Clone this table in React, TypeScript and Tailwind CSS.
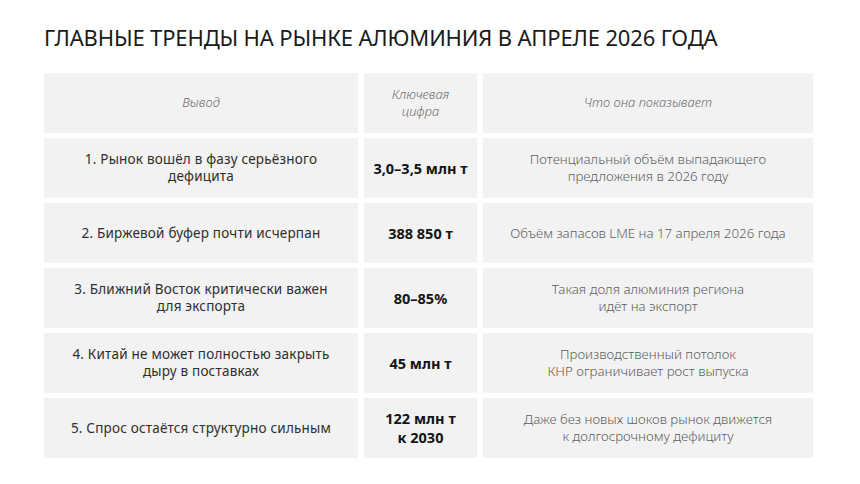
const rows = [
  {
    title: ["1. Рынок вошёл в фазу серьёзного", "дефицита"],
    value: ["3,0–3,5 млн т"],
    note: ["Потенциальный объём выпадающего", "предложения в 2026 году"],
  },
  {
    title: ["2. Биржевой буфер почти исчерпан"],
    value: ["388 850 т"],
    note: ["Объём запасов LME на 17 апреля 2026 года"],
  },
  {
    title: ["3. Ближний Восток критически важен", "для экспорта"],
    value: ["80–85%"],
    note: ["Такая доля алюминия региона", "идёт на экспорт"],
  },
  {
    title: ["4. Китай не может полностью закрыть", "дыру в поставках"],
    value: ["45 млн т"],
    note: ["Производственный потолок", "КНР ограничивает рост выпуска"],
  },
  {
    title: ["5. Спрос остаётся структурно сильным"],
    value: ["122 млн т", "к 2030"],
    note: ["Даже без новых шоков рынок движется", "к долгосрочному дефициту"],
  },
];

const cell = "flex flex-col items-center justify-center text-center bg-[#f2f2f2] h-[60px] whitespace-nowrap";

function Lines({ lines }: { lines: string[] }) {
  return (
    <>
      {lines.map((l) => (
        <span key={l}>{l}</span>
      ))}
    </>
  );
}

export default function App() {
  return (
    <div className="w-[860px] h-[484px] bg-white font-['Noto_Sans',sans-serif] overflow-hidden">
      <h1 className="pl-[44px] pt-[23px] text-[22px] leading-[28px] text-[#1a1a1a] tracking-[-0.15px] uppercase">
        Главные тренды на рынке алюминия в апреле 2026 года
      </h1>

      <div className="mt-[22px] ml-[44px] w-[769px] grid grid-cols-[314px_113px_330px] gap-x-[6px] gap-y-[5px]">
        <div className={`${cell} text-[13px] italic font-light text-[#6e6e6e]`}>Вывод</div>
        <div className={`${cell} text-[13px] italic font-light text-[#6e6e6e] leading-[17px]`}>
          <span>Ключевая</span>
          <span>цифра</span>
        </div>
        <div className={`${cell} text-[13px] italic font-light text-[#6e6e6e]`}>Что она показывает</div>

        {rows.map((r) => (
          <>
            <div key={r.title[0]} className={`${cell} text-[13.5px] leading-[17px] tracking-[0.2px] text-[#2e2e2e]`}>
              <Lines lines={r.title} />
            </div>
            <div className={`${cell} text-[14.5px] leading-[19px] font-bold text-[#141414]`}>
              <Lines lines={r.value} />
            </div>
            <div className={`${cell} text-[13.3px] leading-[17px] font-light text-[#5e5e5e]`}>
              <Lines lines={r.note} />
            </div>
          </>
        ))}
      </div>
    </div>
  );
}
